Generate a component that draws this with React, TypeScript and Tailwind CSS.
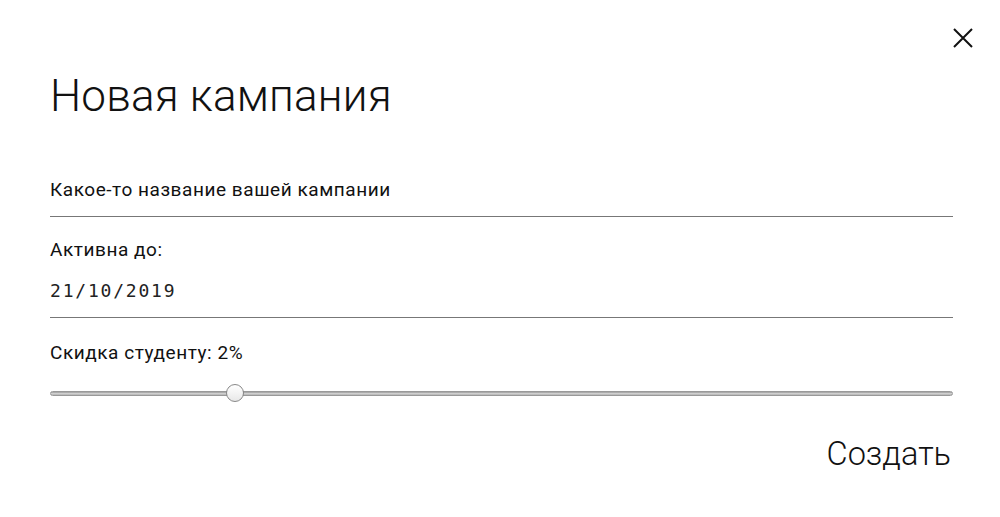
import React from "react";

export default function App() {
  const value = 2;
  const pct = 20.5;
  return (
    <div className="w-[1000px] h-[517px] bg-white relative overflow-hidden" style={{ fontFamily: "Roboto, 'Noto Sans', sans-serif" }}>
      <button className="absolute right-[26px] top-[27px] w-[22px] h-[22px] flex items-center justify-center">
        <svg width="22" height="22" viewBox="0 0 22 22">
          <path d="M2 2 L20 20 M20 2 L2 20" stroke="#111" strokeWidth="2" />
        </svg>
      </button>
      <div className="flex flex-col pl-[50px] pr-[47px] pt-[70px]">
        <h1 className="text-[44px] font-light leading-[52px] text-[#111] tracking-[0.2px]">Новая кампания</h1>
        <div className="mt-[56px] flex flex-col">
          <div className="text-[19px] leading-[24px] text-[#111] tracking-[0.55px] pb-[14px] border-b border-[#777]">Какое-то название вашей кампании</div>
          <div className="mt-[21px] text-[19px] leading-[24px] text-[#111] tracking-[0.55px]">Активна до:</div>
          <div className="mt-[19px] pb-[16px] border-b border-[#777] text-[18px] leading-[20px] text-[#222] tracking-[1.8px]" style={{ fontFamily: "'DejaVu Sans Mono', monospace" }}>21/10/2019</div>
          <div className="mt-[23px] text-[19px] leading-[24px] text-[#111] tracking-[0.55px]">Скидка студенту: {value}%</div>
          <div className="mt-[19px] relative h-[18px] flex items-center">
            <div className="w-full h-[5px] rounded-full bg-gradient-to-b from-[#9a9a9a] via-[#cfcfcf] to-[#b5b5b5] border border-[#999]" />
            <div className="absolute top-0 w-[18px] h-[18px] rounded-full bg-gradient-to-b from-white to-[#e8e8e8] border border-[#888] -translate-x-1/2" style={{ left: `${pct}%` }} />
          </div>
          <div className="mt-[32px] flex justify-end">
            <button className="text-[32.5px] font-light leading-[40px] text-[#111] pr-[2px]">Создать</button>
          </div>
        </div>
      </div>
    </div>
  );
}
